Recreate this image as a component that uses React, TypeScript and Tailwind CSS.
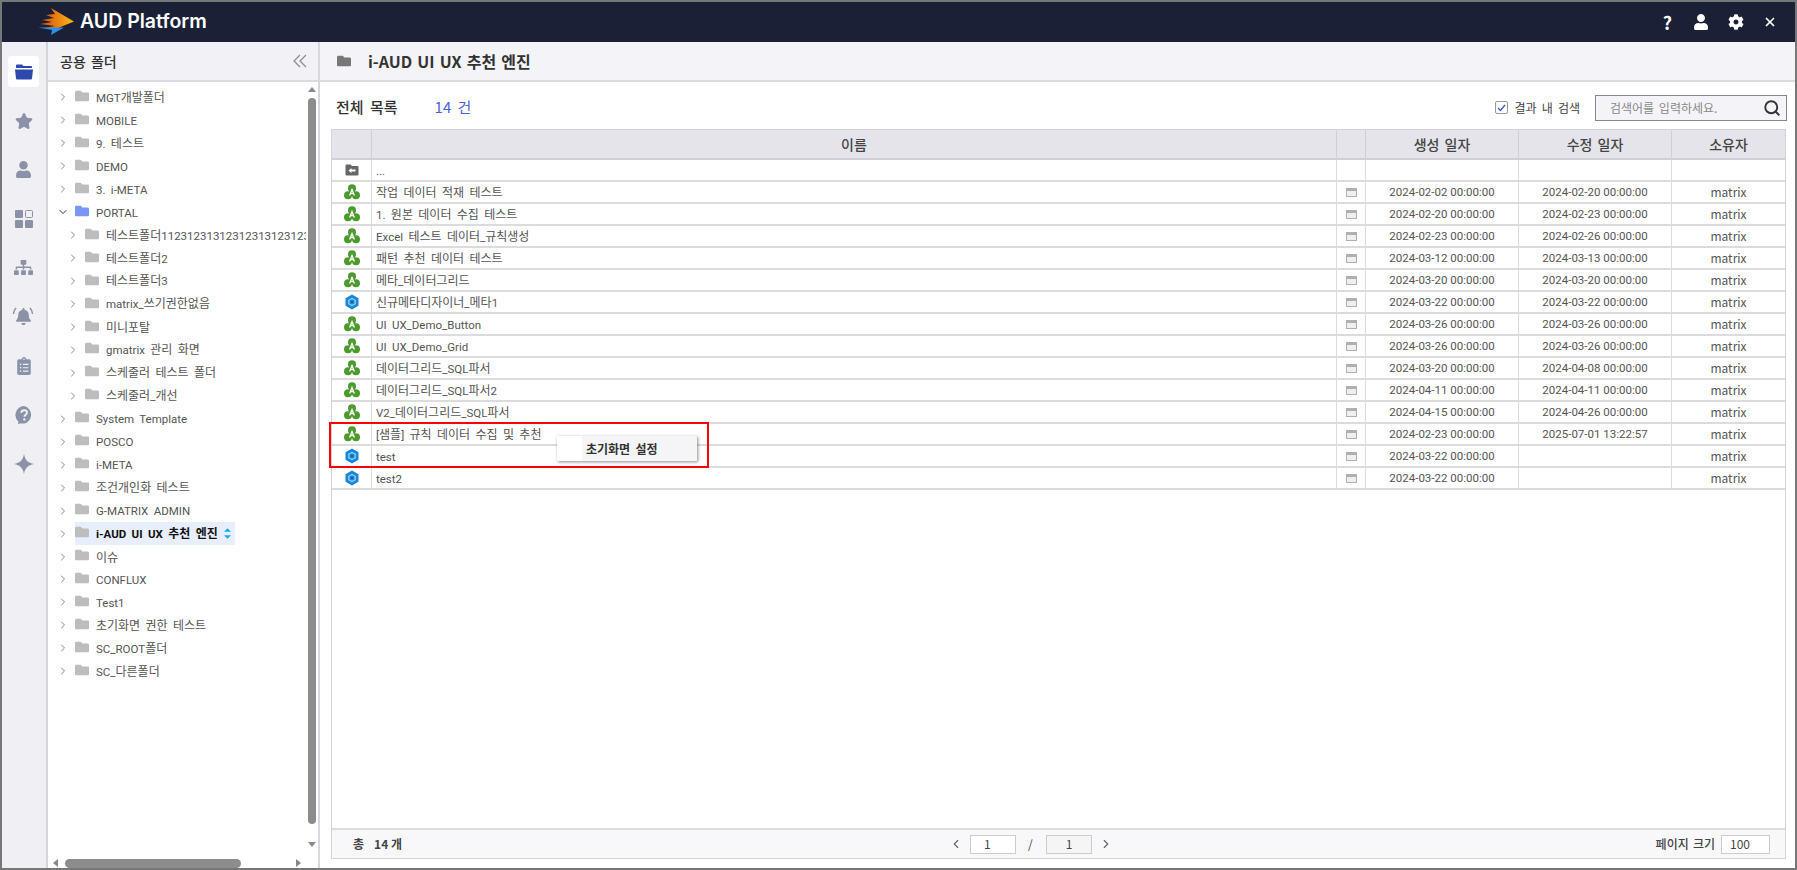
import type { FC, ReactNode } from 'react'
import { FaBell, FaClipboardList, FaCog, FaFolder, FaSitemap, FaStar, FaUser } from 'react-icons/fa'
import { FiChevronDown, FiChevronLeft, FiChevronRight, FiSearch, FiX } from 'react-icons/fi'

type TreeItem = { name: string; depth?: number; open?: boolean; selected?: boolean }

const treeItems: TreeItem[] = [
  { name: 'MGT개발폴더' },
  { name: 'MOBILE' },
  { name: '9. 테스트' },
  { name: 'DEMO' },
  { name: '3. i-META' },
  { name: 'PORTAL', open: true },
  { name: '테스트폴더11231231312312313123123123123', depth: 1 },
  { name: '테스트폴더2', depth: 1 },
  { name: '테스트폴더3', depth: 1 },
  { name: 'matrix_쓰기권한없음', depth: 1 },
  { name: '미니포탈', depth: 1 },
  { name: 'gmatrix 관리 화면', depth: 1 },
  { name: '스케줄러 테스트 폴더', depth: 1 },
  { name: '스케줄러_개선', depth: 1 },
  { name: 'System Template' },
  { name: 'POSCO' },
  { name: 'i-META' },
  { name: '조건개인화 테스트' },
  { name: 'G-MATRIX ADMIN' },
  { name: 'i-AUD UI UX 추천 엔진', selected: true },
  { name: '이슈' },
  { name: 'CONFLUX' },
  { name: 'Test1' },
  { name: '초기화면 권한 테스트' },
  { name: 'SC_ROOT폴더' },
  { name: 'SC_다른폴더' },
]

type Row = { name: string; kind: 'up' | 'green' | 'blue'; created: string; modified: string; owner: string }

const rows: Row[] = [
  { name: '...', kind: 'up', created: '', modified: '', owner: '' },
  { name: '작업 데이터 적재 테스트', kind: 'green', created: '2024-02-02 00:00:00', modified: '2024-02-20 00:00:00', owner: 'matrix' },
  { name: '1. 원본 데이터 수집 테스트', kind: 'green', created: '2024-02-20 00:00:00', modified: '2024-02-23 00:00:00', owner: 'matrix' },
  { name: 'Excel 테스트 데이터_규칙생성', kind: 'green', created: '2024-02-23 00:00:00', modified: '2024-02-26 00:00:00', owner: 'matrix' },
  { name: '패턴 추천 데이터 테스트', kind: 'green', created: '2024-03-12 00:00:00', modified: '2024-03-13 00:00:00', owner: 'matrix' },
  { name: '메타_데이터그리드', kind: 'green', created: '2024-03-20 00:00:00', modified: '2024-03-20 00:00:00', owner: 'matrix' },
  { name: '신규메타디자이너_메타1', kind: 'blue', created: '2024-03-22 00:00:00', modified: '2024-03-22 00:00:00', owner: 'matrix' },
  { name: 'UI UX_Demo_Button', kind: 'green', created: '2024-03-26 00:00:00', modified: '2024-03-26 00:00:00', owner: 'matrix' },
  { name: 'UI UX_Demo_Grid', kind: 'green', created: '2024-03-26 00:00:00', modified: '2024-03-26 00:00:00', owner: 'matrix' },
  { name: '데이터그리드_SQL파서', kind: 'green', created: '2024-03-20 00:00:00', modified: '2024-04-08 00:00:00', owner: 'matrix' },
  { name: '데이터그리드_SQL파서2', kind: 'green', created: '2024-04-11 00:00:00', modified: '2024-04-11 00:00:00', owner: 'matrix' },
  { name: 'V2_데이터그리드_SQL파서', kind: 'green', created: '2024-04-15 00:00:00', modified: '2024-04-26 00:00:00', owner: 'matrix' },
  { name: '[샘플] 규칙 데이터 수집 및 추천', kind: 'green', created: '2024-02-23 00:00:00', modified: '2025-07-01 13:22:57', owner: 'matrix' },
  { name: 'test', kind: 'blue', created: '2024-03-22 00:00:00', modified: '', owner: 'matrix' },
  { name: 'test2', kind: 'blue', created: '2024-03-22 00:00:00', modified: '', owner: 'matrix' },
]

const gridCols = 'grid grid-cols-[40px_965px_29px_153px_153px_1fr]'

// latin runs sit a bit narrower than the hangul around them
const Mixed: FC<{ text: string }> = ({ text }) => (
  <>
    {text.split(/([\x20-\x7e]+)/).map((part, index) =>
      index % 2 === 1 ? (
        <span className="font-['Roboto',sans-serif] text-[11.5px]" key={index}>
          {part}
        </span>
      ) : (
        part
      ),
    )}
  </>
)

const Logo: FC = () => (
  <svg width="38" height="28" viewBox="0 0 38 28">
    <defs>
      <linearGradient id="logoOrange" x1="0" x2="1" y1="0" y2="0">
        <stop offset="0" stopColor="#d9480f" />
        <stop offset="1" stopColor="#fdb813" />
      </linearGradient>
    </defs>
    <path d="M13 0 L36 13.5 L20 20 L6 20 L17 18 L2 16 L14 14 L4 12 L16 10 L8 7 L17 6 Z" fill="url(#logoOrange)" />
    <path d="M0 19.5 L26 19.5 L13 27 L14 22 Z" fill="#2f8fe0" />
  </svg>
)

const ActiveFolderIcon: FC = () => (
  <svg width="18" height="16" viewBox="0 0 18 16" fill="#2f49ab">
    <path d="M1 3 V1.500 A1 1 0 0 1 2 0.500 H7 L8.500 2 H16 A1 1 0 0 1 17 3 V4 H1 Z" />
    <path d="M0 5.500 H18 L17 14.500 A1 1 0 0 1 16 15.500 H2 A1 1 0 0 1 1 14.500 Z" />
  </svg>
)

const GridNavIcon: FC = () => (
  <svg width="18" height="18" viewBox="0 0 18 18" fill="#8b92a8">
    <rect x="0" y="0" width="8" height="8" rx="1" />
    <rect x="10.500" y="0.500" width="7" height="7" rx="1" fill="none" stroke="#8b92a8" />
    <rect x="0" y="10" width="8" height="8" rx="1" />
    <rect x="10" y="10" width="8" height="8" rx="1" />
  </svg>
)

const HelpBubbleIcon: FC = () => (
  <svg width="18" height="18" viewBox="0 0 18 18">
    <path d="M9 0a9 9 0 0 1 0 17.600H5L3 18l.4-2.400A9 9 0 0 1 9 0Z" fill="#8b92a8" />
    <path d="M6.200 6.800C6.400 5.200 7.600 4.200 9.200 4.200c1.700 0 2.800 1 2.800 2.400 0 2.200-2.600 2.200-2.600 4.200" fill="none" stroke="#efeff4" strokeWidth="1.900" />
    <circle cx="9.400" cy="13.400" r="1.200" fill="#efeff4" />
  </svg>
)

const SparkleIcon: FC = () => (
  <svg width="20" height="20" viewBox="0 0 20 20" fill="#8b92a8">
    <path d="M10 0 C11 6 14 9 20 10 C14 11 11 14 10 20 C9 14 6 11 0 10 C6 9 9 6 10 0 Z" />
  </svg>
)

const BellIcon: FC = () => (
  <div className="relative flex items-center justify-center">
    <FaBell className="text-[17px] text-[#8b92a8]" />
    <svg width="22" height="10" viewBox="0 0 22 10" className="absolute -top-px left-[-3px]" fill="none" stroke="#8b92a8" strokeWidth="1.500">
      <path d="M4 1 C2.500 2.500 1.500 4.500 1.500 7" />
      <path d="M18 1 C19.500 2.500 20.500 4.500 20.500 7" />
    </svg>
  </div>
)

const navItems: ReactNode[] = [
  <ActiveFolderIcon key="folder" />,
  <FaStar key="star" className="text-[18px] text-[#8b92a8]" />,
  <FaUser key="user" className="text-[17px] text-[#8b92a8]" />,
  <GridNavIcon key="grid" />,
  <FaSitemap key="sitemap" className="text-[19px] text-[#8b92a8]" />,
  <BellIcon key="bell" />,
  <FaClipboardList key="clipboard" className="text-[18px] text-[#8b92a8]" />,
  <HelpBubbleIcon key="help" />,
  <SparkleIcon key="sparkle" />,
]

const GreenIcon: FC = () => (
  <svg width="16" height="16" viewBox="0 0 16 16">
    <g fill="#4a9a2c">
      <circle cx="8" cy="4.300" r="4" />
      <circle cx="4" cy="11.200" r="4" />
      <circle cx="12" cy="11.200" r="4" />
      <rect x="5" y="6" width="6" height="6" />
    </g>
    <path d="M5.600 11.500 L8 5.500 L10.400 11.500 M6.600 9.500 H9.400" fill="none" stroke="#fff" strokeWidth="1.300" />
  </svg>
)

const BlueIcon: FC = () => (
  <svg width="14" height="16" viewBox="0 0 14 16">
    <path d="M7 0.500 L13.500 4.200 L13.500 11.800 L7 15.500 L0.500 11.800 L0.500 4.200 Z" fill="#1a87d8" />
    <path d="M7 4.500 L10.200 6.300 L10.200 9.700 L7 11.500 L3.800 9.700 L3.800 6.300 Z" fill="none" stroke="#8fd0f8" strokeWidth="1.300" />
    <circle cx="7" cy="8" r="1.300" fill="#0f5fa8" />
  </svg>
)

const UpFolderIcon: FC = () => (
  <svg width="14" height="12" viewBox="0 0 14 12">
    <path d="M1.500 0.500 H5.500 L7 2 H12.500 A1 1 0 0 1 13.500 3 V10.500 A1 1 0 0 1 12.500 11.500 H1.500 A1 1 0 0 1 0.500 10.500 V1.500 A1 1 0 0 1 1.500 0.500 Z" fill="#666" />
    <path d="M3.500 6.500 L6.500 4 V5.500 H10.500 V7.500 H6.500 V9 Z" fill="#fff" />
  </svg>
)

const RowKindIcon: FC<{ kind: Row['kind'] }> = ({ kind }) => {
  if (kind === 'up') return <UpFolderIcon />
  return kind === 'green' ? <GreenIcon /> : <BlueIcon />
}

const WindowIcon: FC = () => (
  <svg width="11" height="9" viewBox="0 0 11 9">
    <rect x="0.500" y="0.500" width="10" height="8" fill="#efefef" stroke="#b0b0b0" />
    <rect x="0.500" y="0.500" width="10" height="2.500" fill="#b0b0b0" />
  </svg>
)

const TreeRow: FC<{ item: TreeItem }> = ({ item }) => (
  <div className={`flex h-[22.96px] items-center whitespace-nowrap ${item.depth ? 'pl-[19px]' : 'pl-[9px]'}`}>
    <span className="flex w-[18px] shrink-0 items-center">
      {item.open ? (
        <FiChevronDown className="text-[12px] text-[#333]" />
      ) : (
        <FiChevronRight className="text-[12px] text-[#888]" />
      )}
    </span>
    <span className={`flex h-[23px] items-center pr-[4px] ${item.selected ? 'bg-[#e8eefc]' : ''}`}>
      <FaFolder className={`mb-[3px] shrink-0 text-[14px] ${item.open ? 'text-[#7b96f5]' : 'text-[#bdbdbd]'}`} />
      <span className={`ml-[7px] text-[12px] [word-spacing:2.5px] ${item.selected ? 'font-bold text-[#111]' : 'text-[#555]'}`}>
        <Mixed text={item.name} />
      </span>
      {item.selected && (
        <svg width="7" height="11" viewBox="0 0 8 12" className="ml-[6px]" fill="#18a8e8">
          <path d="M4 0 L8 4 H0 Z" />
          <path d="M4 12 L0 8 H8 Z" />
        </svg>
      )}
    </span>
  </div>
)

const TreePanel: FC = () => (
  <aside className="flex w-[272px] shrink-0 flex-col border-r-2 border-[#d8d8dc]">
    <div className="flex h-[40px] shrink-0 items-center justify-between border-b-2 border-[#dcdce0] bg-[#f1f1f6] pl-[12px] pr-[11px]">
      <span className="text-[14px] font-medium text-[#333] [word-spacing:2px]">공용 폴더</span>
      <svg width="14" height="14" viewBox="0 0 14 14" fill="none" stroke="#8a8a8a" strokeWidth="1.200">
        <path d="M7 1 L1 7 L7 13" />
        <path d="M13 1 L7 7 L13 13" />
      </svg>
    </div>
    <div className="flex min-h-0 flex-1">
      <div className="flex min-w-0 flex-1 flex-col">
        <div className="min-h-0 flex-1 overflow-hidden pt-[4px]">
          {treeItems.map((item) => (
            <TreeRow item={item} key={item.name} />
          ))}
        </div>
        <div className="flex h-[10px] shrink-0 items-center gap-[7px] pl-[5px] pr-[5px]">
          <span className="h-0 w-0 border-y-[4px] border-r-[5px] border-y-transparent border-r-[#888]" />
          <span className="h-[9px] w-[176px] rounded-full bg-[#8c8c8c]" />
          <span className="ml-auto h-0 w-0 border-y-[4px] border-l-[5px] border-y-transparent border-l-[#888]" />
        </div>
      </div>
      <div className="flex w-[12px] shrink-0 flex-col items-center pt-[5px]">
        <span className="h-0 w-0 border-x-[4px] border-b-[5px] border-x-transparent border-b-[#888]" />
        <span className="mt-[6px] h-[726px] w-[8px] rounded-full bg-[#8c8c8c]" />
        <span className="mt-[18px] h-0 w-0 border-x-[4px] border-t-[5px] border-x-transparent border-t-[#888]" />
      </div>
    </div>
  </aside>
)

const HeaderCell: FC<{ children?: ReactNode }> = ({ children }) => (
  <div className="flex items-center justify-center border-r border-[#cfcfd4] text-[14px] font-medium text-[#444] [word-spacing:2px] last:border-r-0">
    {children}
  </div>
)

const Cell: FC<{ children?: ReactNode; className?: string }> = ({ children, className = 'justify-center' }) => (
  <div className={`flex items-center border-r border-[#dcdcdc] text-[12px] text-[#555] last:border-r-0 ${className}`}>
    {children}
  </div>
)

const DateCell: FC<{ value: string }> = ({ value }) => (
  <Cell className="justify-center pt-px">
    <span className="font-['Roboto',sans-serif] text-[11.5px]">{value}</span>
  </Cell>
)

const ListTable: FC = () => (
  <div className="relative ml-[11px] mr-[9px] flex min-h-0 flex-1 flex-col border border-[#d4d4d8]">
    <div className={`${gridCols} h-[30px] shrink-0 border-b-2 border-[#d0d0d4] bg-[#e4e4ea]`}>
      <HeaderCell />
      <HeaderCell>이름</HeaderCell>
      <HeaderCell />
      <HeaderCell>생성 일자</HeaderCell>
      <HeaderCell>수정 일자</HeaderCell>
      <HeaderCell>소유자</HeaderCell>
    </div>
    <div className="min-h-0 flex-1">
      {rows.map((row) => (
        <div className={`${gridCols} h-[22px] border-b-2 border-[#dcdcdf]`} key={row.name}>
          <Cell>
            <RowKindIcon kind={row.kind} />
          </Cell>
          <Cell className="justify-start pl-[4px] pt-px [word-spacing:2.5px]">
            <span>
              <Mixed text={row.name} />
            </span>
          </Cell>
          <Cell>{row.kind !== 'up' && <WindowIcon />}</Cell>
          <DateCell value={row.created} />
          <DateCell value={row.modified} />
          <Cell>{row.owner}</Cell>
        </div>
      ))}
    </div>
    <div className="flex h-[30px] shrink-0 items-center border-t-2 border-[#dcdcdf] bg-[#f8f8fa] pl-[21px] pr-[15px] text-[12px] text-[#444]">
      <div className="flex w-[596px] gap-[10px] font-bold">
        <span>총</span>
        <span>14 개</span>
      </div>
      <FiChevronLeft className="text-[14px] text-[#666]" />
      <span className="ml-[7px] flex h-[19px] w-[46px] items-center border border-[#ccc] bg-white pl-[13px]">1</span>
      <span className="ml-[12px]">/</span>
      <span className="ml-[13px] flex h-[19px] w-[46px] items-center border border-[#ccc] bg-[#f5f5f5] pl-[19px]">1</span>
      <FiChevronRight className="ml-[7px] text-[14px] text-[#666]" />
      <span className="ml-auto font-medium [word-spacing:1.5px]">페이지 크기</span>
      <span className="ml-[6px] flex h-[19px] w-[49px] items-center border border-[#ccc] bg-white pl-[8px]">100</span>
    </div>
    <div className="absolute left-[-3px] top-[292px] h-[46px] w-[380px] border-2 border-[#f00]" />
    <div className="absolute left-[225px] top-[306px] flex h-[25px] w-[140px] bg-white shadow-[1px_1px_3px_rgba(0,0,0,0.45)]">
      <div className="w-[25px] shrink-0" />
      <div className="flex flex-1 items-center bg-[#f5f5f8] pl-[4px] text-[12px] font-bold text-[#333] [word-spacing:2.5px]">초기화면 설정</div>
    </div>
  </div>
)

const App: FC = () => (
  <div className="flex h-[870px] w-[1797px] flex-col overflow-hidden border-2 border-[#777] bg-white font-['Noto_Sans_CJK_KR','Noto_Sans',sans-serif]">
    <header className="flex h-[40px] shrink-0 items-center bg-[#1a2035] pl-[36px] pr-[18px] text-white">
      <Logo />
      <span className="ml-[4px] font-['Inter',sans-serif] text-[19.5px] font-semibold">AUD Platform</span>
      <div className="ml-auto flex items-center">
        <span className="text-[18px] font-bold">?</span>
        <FaUser className="ml-[21px] text-[16px]" />
        <FaCog className="ml-[19px] text-[16px]" />
        <FiX className="ml-[19px] text-[14px]" strokeWidth={3} />
      </div>
    </header>
    <div className="flex min-h-0 flex-1">
      <nav className="flex w-[46px] shrink-0 flex-col items-center gap-[18px] border-r-2 border-[#d4d4d8] bg-[#efeff4] pr-[1px] pt-[14px]">
        {navItems.map((icon, index) => (
          <div className={`flex h-[31px] w-[31px] items-center justify-center rounded-[3px] ${index === 0 ? 'bg-white' : ''}`} key={index}>
            {icon}
          </div>
        ))}
      </nav>
      <TreePanel />
      <main className="flex min-w-0 flex-1 flex-col pb-[9px]">
        <div className="flex h-[40px] shrink-0 items-center border-b-2 border-[#dcdce0] bg-[#f3f3f8] pl-[17px]">
          <FaFolder className="text-[14px] text-[#777]" />
          <span className="ml-[17px] text-[16px] font-bold text-[#333] [word-spacing:1.5px]">i-AUD UI UX 추천 엔진</span>
        </div>
        <div className="flex h-[47px] shrink-0 items-center pl-[16px] pr-[8px] pt-[4px]">
          <span className="text-[15px] font-medium text-[#333] [word-spacing:3px]">전체 목록</span>
          <span className="ml-[37px] text-[15px] text-[#4a63d8] [word-spacing:3px]">14 건</span>
          <span className="ml-auto flex h-[13px] w-[13px] items-center justify-center rounded-[2px] border border-[#999] bg-white">
            <svg width="9" height="8" viewBox="0 0 9 8" fill="none" stroke="#3858d6" strokeWidth="1.300">
              <path d="M1 4 L3.500 6.500 L8 1" />
            </svg>
          </span>
          <span className="ml-[6px] text-[12px] text-[#444] [word-spacing:2.5px]">결과 내 검색</span>
          <div className="ml-[15px] flex h-[26px] w-[192px] items-center justify-between border border-[#888] bg-[#f4f4f8] pl-[14px] pr-[5px]">
            <span className="text-[12px] text-[#888] [word-spacing:2px]">검색어를 입력하세요.</span>
            <FiSearch className="text-[18px] text-[#333]" strokeWidth={2.500} />
          </div>
        </div>
        <ListTable />
      </main>
    </div>
  </div>
)

export default App
